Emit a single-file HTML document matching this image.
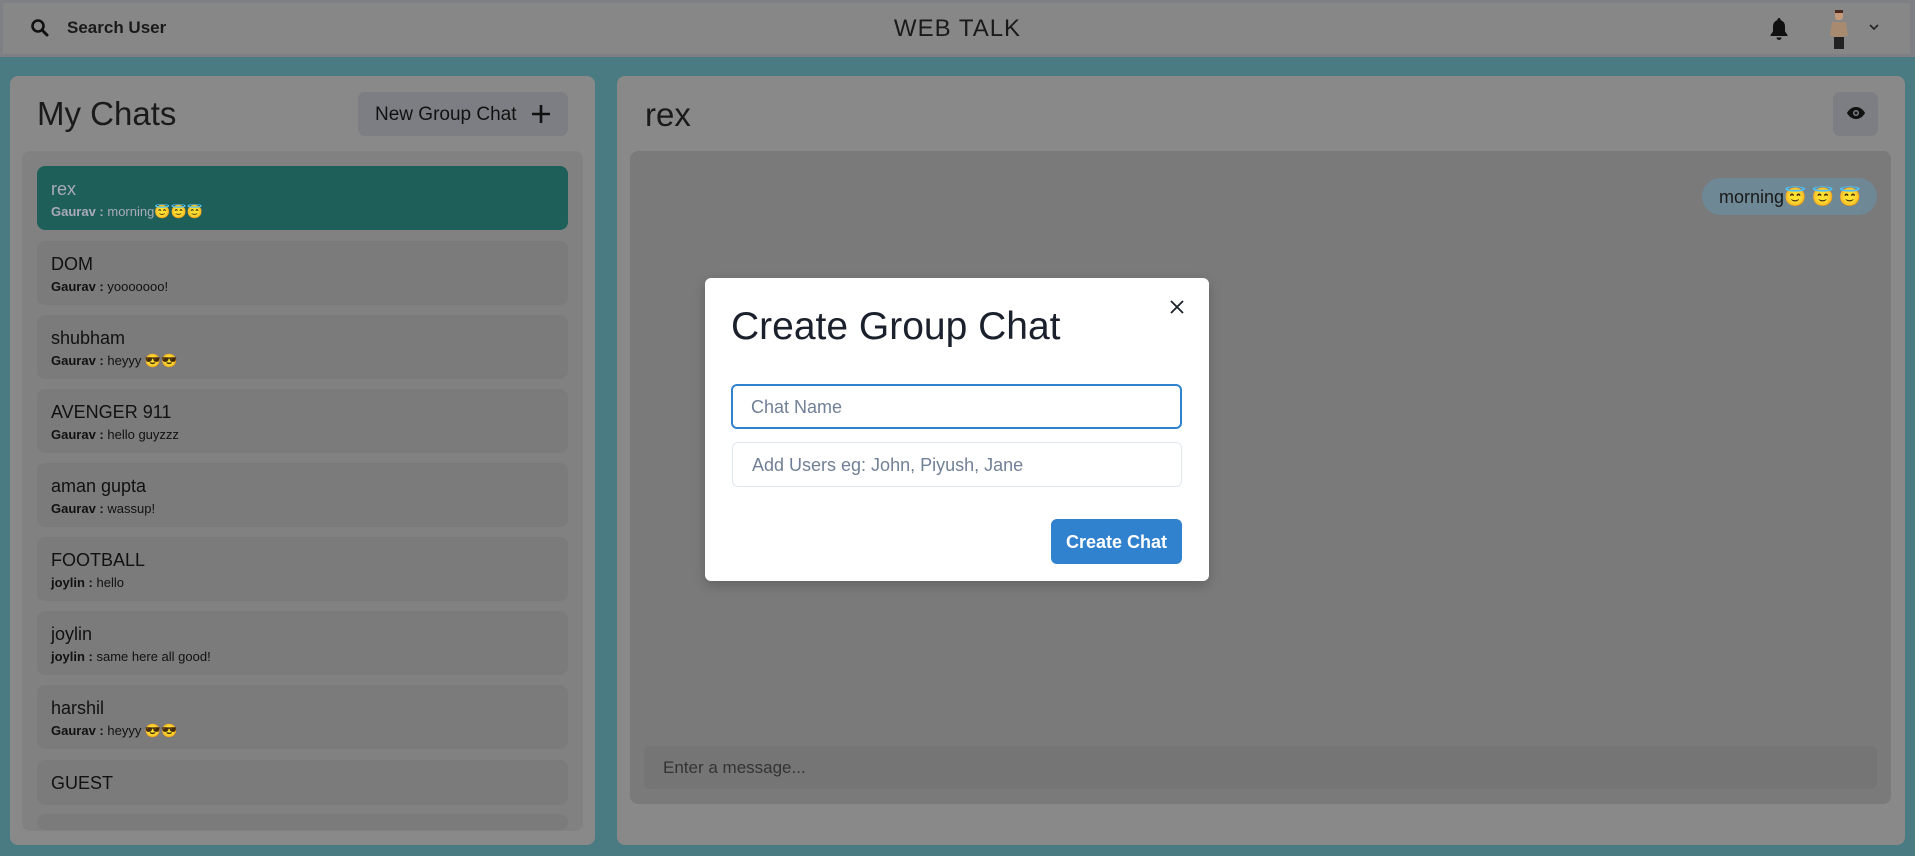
<!DOCTYPE html>
<html><head><meta charset="utf-8"><style>
*{box-sizing:border-box;margin:0;padding:0}
body{width:1915px;height:856px;overflow:hidden;background:#4b7b82;font-family:"Liberation Sans",sans-serif;position:relative;color:#111}
.abs{position:absolute}
.hdr{left:0;top:0;width:1915px;height:57px;background:#878787;border:3px solid #7f8086;border-right-width:5px}
.panel{background:#898989;border-radius:8px}
.item{position:absolute;left:37px;width:531px;height:64px;background:#7b7b7b;border-radius:8px;padding:12px 14px}
.item .n{font-size:18px;color:#111;line-height:22px}
.item .m{font-size:13px;color:#111;margin-top:4px}
.item .m b{font-weight:bold}
</style></head><body>
<div class="abs hdr"></div>
<svg class="abs" style="left:30px;top:18px" width="20" height="20" viewBox="0 0 20 20"><circle cx="8" cy="8" r="5.5" fill="none" stroke="#111" stroke-width="2.6"/><line x1="12" y1="12" x2="17" y2="17" stroke="#111" stroke-width="3" stroke-linecap="round"/></svg>
<div class="abs" style="left:67px;top:18px;font-size:17px;font-weight:bold;color:#1a1a1a">Search User</div>
<div class="abs" style="left:0;width:1915px;top:15px;text-align:center;font-size:24px;color:#1a1a1a;letter-spacing:1px">WEB TALK</div>
<svg class="abs" style="left:1768px;top:17px" width="22" height="24" viewBox="0 0 22 24"><path d="M11 1c-1 0-1.5.7-1.5 1.5v.6C6.5 4 5 6.5 5 9.5v5L2.5 18v1h17v-1L17 14.5v-5c0-3-1.5-5.5-4.5-6.4v-.6C12.5 1.7 12 1 11 1zM8.5 20.5a2.5 2.5 0 0 0 5 0z" fill="#111"/></svg>
<svg class="abs" style="left:1828px;top:9px" width="22" height="40" viewBox="0 0 22 40"><rect x="7" y="2" width="8" height="9" rx="3" fill="#c49a7a"/><rect x="7" y="1" width="8" height="3" fill="#4a2a1a"/><path d="M4 13h14l2 14h-4v13h-3V28h-4v12H6V27H2z" fill="#a88a70"/><rect x="6" y="28" width="10" height="12" fill="#222"/></svg>
<svg class="abs" style="left:1869px;top:24px" width="10" height="7" viewBox="0 0 10 7"><path d="M1 1l4 4 4-4" fill="none" stroke="#222" stroke-width="1.6"/></svg>

<div class="abs panel" style="left:10px;top:76px;width:585px;height:769px"></div>
<div class="abs" style="left:37px;top:95px;font-size:33px;color:#1a1a1a">My Chats</div>
<div class="abs" style="left:358px;top:92px;width:210px;height:44px;background:#7d7e84;border-radius:7px;font-size:19px;color:#111;padding:12px 0 0 17px">New Group Chat</div>
<svg class="abs" style="left:531px;top:104px" width="20" height="20" viewBox="0 0 20 20"><path d="M10 1v18M1 10h18" stroke="#111" stroke-width="2.6"/></svg>
<div class="abs" style="left:22px;top:151px;width:561px;height:680px;background:#818181;border-radius:8px;overflow:hidden"></div>
<div class="item" style="top:166px;background:#1f5f5a"><div class="n" style="color:#aab">rex</div><div class="m" style="color:#aab"><b>Gaurav :</b> morning😇😇😇</div></div>
<div class="item" style="top:241px"><div class="n">DOM</div><div class="m"><b>Gaurav :</b> yooooooo!</div></div>
<div class="item" style="top:315px"><div class="n">shubham</div><div class="m"><b>Gaurav :</b> heyyy 😎😎</div></div>
<div class="item" style="top:389px"><div class="n">AVENGER 911</div><div class="m"><b>Gaurav :</b> hello guyzzz</div></div>
<div class="item" style="top:463px"><div class="n">aman gupta</div><div class="m"><b>Gaurav :</b> wassup!</div></div>
<div class="item" style="top:537px"><div class="n">FOOTBALL</div><div class="m"><b>joylin :</b> hello</div></div>
<div class="item" style="top:611px"><div class="n">joylin</div><div class="m"><b>joylin :</b> same here all good!</div></div>
<div class="item" style="top:685px"><div class="n">harshil</div><div class="m"><b>Gaurav :</b> heyyy 😎😎</div></div>
<div class="item" style="top:760px;height:45px"><div class="n">GUEST</div></div>
<div class="item" style="top:814px;height:16px;padding:0"></div>

<div class="abs panel" style="left:617px;top:76px;width:1288px;height:769px"></div>
<div class="abs" style="left:645px;top:96px;font-size:33px;color:#1a1a1a">rex</div>
<div class="abs" style="left:1833px;top:92px;width:45px;height:44px;background:#7d7e84;border-radius:7px"></div>
<svg class="abs" style="left:1846px;top:106px" width="20" height="14" viewBox="0 0 20 14"><path d="M10 1C5 1 2 5 1 7c1 2 4 6 9 6s8-4 9-6c-1-2-4-6-9-6z" fill="#111"/><circle cx="10" cy="7" r="3" fill="#7d7e84"/><circle cx="10" cy="7" r="1.5" fill="#111"/></svg>
<div class="abs" style="left:630px;top:151px;width:1261px;height:653px;background:#7a7a7a;border-radius:8px"></div>
<div class="abs" style="left:1702px;top:178px;width:175px;height:37px;background:#6e8896;border-radius:19px;font-size:18px;padding:9px 0 0 17px;color:#1a1a1a">morning😇 😇 😇</div>
<div class="abs" style="left:644px;top:746px;width:1233px;height:43px;background:#757575;border-radius:6px;font-size:17px;color:#333;padding:12px 0 0 19px">Enter a message...</div>

<div class="abs" style="left:705px;top:278px;width:504px;height:303px;background:#fff;border-radius:6px;box-shadow:0 4px 12px rgba(0,0,0,.2)"></div>
<div class="abs" style="left:731px;top:305px;font-size:39px;color:#1a202c">Create Group Chat</div>
<svg class="abs" style="left:1170px;top:300px" width="14" height="14" viewBox="0 0 14 14"><path d="M1 1l12 12M13 1L1 13" stroke="#1a202c" stroke-width="1.8"/></svg>
<div class="abs" style="left:731px;top:384px;width:451px;height:45px;border:2px solid #3182ce;border-radius:6px;font-size:18px;color:#718096;padding:11px 0 0 18px">Chat Name</div>
<div class="abs" style="left:732px;top:442px;width:450px;height:45px;border:1px solid #e2e8f0;border-radius:6px;font-size:18px;color:#718096;padding:12px 0 0 19px">Add Users eg: John, Piyush, Jane</div>
<div class="abs" style="left:1051px;top:519px;width:131px;height:45px;background:#3182ce;border-radius:6px;color:#fff;font-size:18px;font-weight:bold;text-align:center;padding-top:13px">Create Chat</div>
</body></html>
